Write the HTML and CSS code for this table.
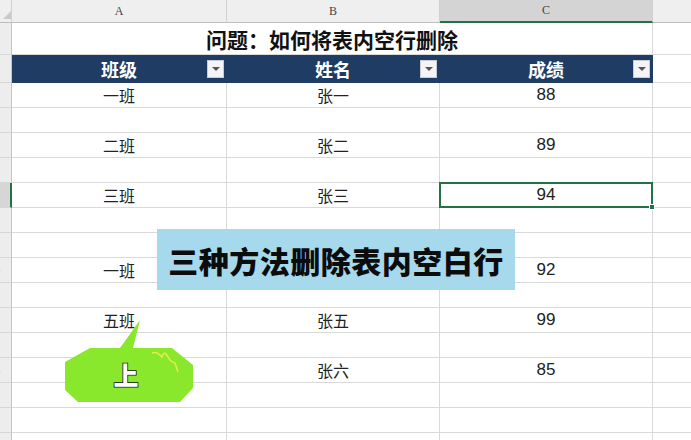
FILE: index.html
```html
<!DOCTYPE html>
<html lang="zh">
<head>
<meta charset="utf-8">
<link rel="stylesheet" href="styles.css">
</head>
<body>
<div class="wrap">
  <div class="sheet">
    <!-- column headers -->
    <div class="ch corner"><span class="tri"></span></div>
    <div class="ch">A</div>
    <div class="ch">B</div>
    <div class="ch sel">C</div>
    <div class="ch"></div>

    <!-- row 1 -->
    <div class="rh"><span>1</span></div>
    <div class="title">问题：如何将表内空行删除</div>
    <div class="c"></div>

    <!-- row 2 -->
    <div class="rh"><span>2</span></div>
    <div class="hd"><span></span><span class="ht">班级</span><span class="fb"><i></i></span></div>
    <div class="hd"><span></span><span class="ht">姓名</span><span class="fb"><i></i></span></div>
    <div class="hd"><span></span><span class="ht">成绩</span><span class="fb"><i></i></span></div>
    <div class="c"></div>

    <div class="rh"><span>3</span></div>
    <div class="c">一班</div><div class="c">张一</div><div class="c num">88</div><div class="c"></div>
    <div class="rh"><span>4</span></div>
    <div class="c"></div><div class="c"></div><div class="c"></div><div class="c"></div>
    <div class="rh"><span>5</span></div>
    <div class="c">二班</div><div class="c">张二</div><div class="c num">89</div><div class="c"></div>
    <div class="rh"><span>6</span></div>
    <div class="c"></div><div class="c"></div><div class="c"></div><div class="c"></div>
    <div class="rh rsel"><span>7</span></div>
    <div class="c">三班</div><div class="c">张三</div><div class="c num active">94<b class="handle"></b></div><div class="c"></div>
    <div class="rh"><span>8</span></div>
    <div class="c"></div><div class="c"></div><div class="c"></div><div class="c"></div>
    <div class="rh"><span>9</span></div>
    <div class="c"></div><div class="c"></div><div class="c"></div><div class="c"></div>
    <div class="rh"><span>10</span></div>
    <div class="c">一班</div><div class="c"></div><div class="c num">92</div><div class="c"></div>
    <div class="rh"><span>11</span></div>
    <div class="c"></div><div class="c"></div><div class="c"></div><div class="c"></div>
    <div class="rh"><span>12</span></div>
    <div class="c">五班</div><div class="c">张五</div><div class="c num">99</div><div class="c"></div>
    <div class="rh"><span>13</span></div>
    <div class="c"></div><div class="c"></div><div class="c"></div><div class="c"></div>
    <div class="rh"><span>14</span></div>
    <div class="c"></div><div class="c">张六</div><div class="c num">85</div><div class="c"></div>
    <div class="rh"><span>15</span></div>
    <div class="c"></div><div class="c"></div><div class="c"></div><div class="c"></div>
    <div class="rh"><span>16</span></div>
    <div class="c"></div><div class="c"></div><div class="c"></div><div class="c"></div>
    <div class="rh"><span>17</span></div>
    <div class="c"></div><div class="c"></div><div class="c"></div><div class="c"></div>
  </div>

  <div class="banner">三种方法删除表内空白行</div>

  <svg class="bubble" width="140" height="92" viewBox="0 0 140 92">
    <path d="M30 33 L60 33 L80 5 L73 33 L112 33 L133 50 L133 73 L120 87 L18 87 L5 75 L5 47 Z" fill="#8ae82c"/>
    <path d="M92 38 Q97 36 102 42 Q104 36 106 39 L110 45 Q113 48 115 48 L118 57" fill="none" stroke="#eaea55" stroke-width="1.4"/>
    <text x="66" y="70" class="bt">上</text>
  </svg>
</div>
</body>
</html>
```

FILE: styles.css
```css
* { box-sizing: border-box; }
html, body { margin: 0; padding: 0; background: #fff; }
body {
  width: 691px;
  height: 440px;
  overflow: hidden;
  font-family: "Noto Sans CJK SC", "Noto Sans", sans-serif;
}
.wrap { position: relative; width: 691px; height: 440px; overflow: hidden; }

.sheet {
  display: grid;
  grid-template-columns: 12px 215px 213px 213px 80px;
  grid-template-rows: 23px 32px 28px repeat(15, 25px);
}

.ch {
  background: #efefef;
  border-right: 1px solid #d0d0d0;
  border-bottom: 1px solid #bdbdbd;
  display: flex;
  align-items: center;
  justify-content: center;
  font-family: "Liberation Serif", serif;
  font-size: 12px;
  color: #454545;
}
.ch.sel { background: #d4d4d4; border-bottom: 2px solid #217346; }
.tri {
  width: 0; height: 0;
  border-left: 8px solid transparent;
  border-bottom: 8px solid #c9c9c9;
  align-self: flex-end;
  margin: 0 0 3px 2px;
}

.rh {
  background: #ededed;
  border-right: 1px solid #c4c4c4;
  border-bottom: 1px solid #d6d6d6;
  overflow: hidden;
  display: flex;
  align-items: center;
  font-family: "Liberation Sans", sans-serif;
  font-size: 13px;
  color: #555;
}
.rh span { flex: 0 0 30px; margin-left: -22px; text-align: center; }
.rh.rsel { background: #d6d6d6; border-right: 2px solid #217346; }

.c {
  border-right: 1px solid #d9d9d9;
  border-bottom: 1px solid #d9d9d9;
  display: flex;
  align-items: center;
  justify-content: center;
  font-size: 16px;
  color: #222;
}
.num { font-family: "Liberation Sans", sans-serif; font-size: 17px; }
.active {
  position: relative;
  border: 2px solid #217346;
  margin: -1px 0 0 -1px;
}
.handle {
  position: absolute;
  right: -4px;
  bottom: -4px;
  width: 6px;
  height: 6px;
  background: #217346;
  border: 1px solid #fff;
}

.title {
  grid-column: 2 / span 3;
  border-right: 1px solid #d9d9d9;
  border-bottom: 1px solid #d9d9d9;
  display: flex;
  align-items: center;
  justify-content: center;
  font-size: 21px;
  font-weight: 700;
  color: #111;
}

.hd {
  background: #1f3d64;
  display: grid;
  grid-template-columns: 1fr auto 1fr;
  align-items: center;
  border-right: 1px solid #1f3d64;
}
.ht { color: #fff; font-size: 18px; font-weight: 700; }
.fb {
  justify-self: end;
  width: 17px;
  height: 18px;
  margin-right: 2px;
  background: #f4f4f6;
  border: 1px solid #c8cbd2;
  display: flex;
  align-items: center;
  justify-content: center;
}
.fb i {
  width: 0; height: 0;
  border-left: 4px solid transparent;
  border-right: 4px solid transparent;
  border-top: 4px solid #555;
}

.banner {
  position: absolute;
  left: 157px;
  top: 229px;
  width: 358px;
  height: 61px;
  background: #a7d9ec;
  display: flex;
  align-items: center;
  justify-content: center;
  font-size: 30px;
  font-weight: 900;
  color: #0c0c0c;
  letter-spacing: 0.5px;
}

.bubble { position: absolute; left: 60px; top: 315px; }
.bt {
  font-family: "Noto Sans CJK SC", sans-serif;
  font-size: 25px;
  font-weight: 900;
  fill: #fff;
  stroke: #111;
  stroke-width: 1.6px;
  paint-order: stroke;
  text-anchor: middle;
}
```
